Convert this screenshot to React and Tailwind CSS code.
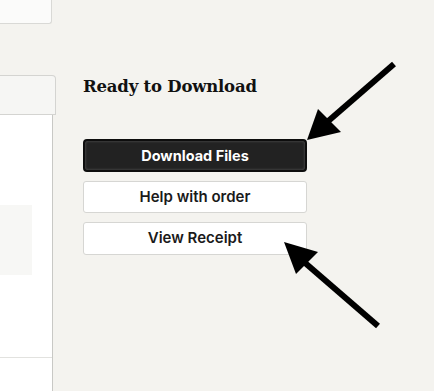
import React from "react";

export default function App() {
  return (
    <div className="relative w-[434px] h-[391px] overflow-hidden bg-[#f4f3ef] flex" style={{ fontFamily: "Inter, 'Liberation Sans', sans-serif" }}>
      {/* Left column */}
      <div className="w-[56px] flex flex-col items-start shrink-0">
        <div className="w-[52px] h-[24px] bg-[#fbfbfa] border-r border-b border-[#d9d9d6] rounded-br-[3px]" />
        <div className="mt-[51px] w-[56px] h-[40px] bg-[#f6f6f4] border border-l-0 border-[#d4d4d1] rounded-tr-[4px]" />
        <div className="w-[53px] flex-1 bg-white border-r border-[#c8c8c5] flex flex-col">
          <div className="mt-[90px] w-[32px] h-[70px] bg-[#f7f7f5]" />
          <div className="mt-[82px] h-px w-full bg-[#e2e2df]" />
        </div>
      </div>

      {/* Right content */}
      <div className="pl-[27px] pt-[76px] flex flex-col">
        <h2 className="text-[16.5px] leading-[22px] font-bold text-[#111] tracking-[-0.2px]" style={{ fontFamily: "'DejaVu Serif', serif" }}>
          Ready to Download
        </h2>
        <div className="mt-[41px] w-[224px] flex flex-col gap-[10px]">
          <button className="h-[33px] rounded-[4px] bg-[#222] border-2 border-[#0d0d0d] text-white text-[14.5px] font-bold shadow-[inset_0_0_3px_rgba(255,255,255,0.25)]">
            Download Files
          </button>
          <button className="h-[32px] -mt-[1px] rounded-[3px] bg-white border border-[#d6d6d3] text-[#1a1a1a] text-[15px] font-semibold">
            Help with order
          </button>
          <button className="h-[33px] -mt-[1px] rounded-[3px] bg-white border border-[#d6d6d3] text-[#1a1a1a] text-[15px] font-semibold">
            View Receipt
          </button>
        </div>
      </div>

      {/* Annotation arrows */}
      <svg className="absolute inset-0 pointer-events-none" width="434" height="391" viewBox="0 0 434 391">
        <line x1="394" y1="64" x2="326" y2="123" stroke="#000" strokeWidth="6" strokeLinecap="butt" />
        <polygon points="307,140 318,109 341,132" fill="#000" />
        <line x1="378" y1="326" x2="304" y2="262" stroke="#000" strokeWidth="6" strokeLinecap="butt" />
        <polygon points="284,242 296,274 318,252" fill="#000" />
      </svg>
    </div>
  );
}
